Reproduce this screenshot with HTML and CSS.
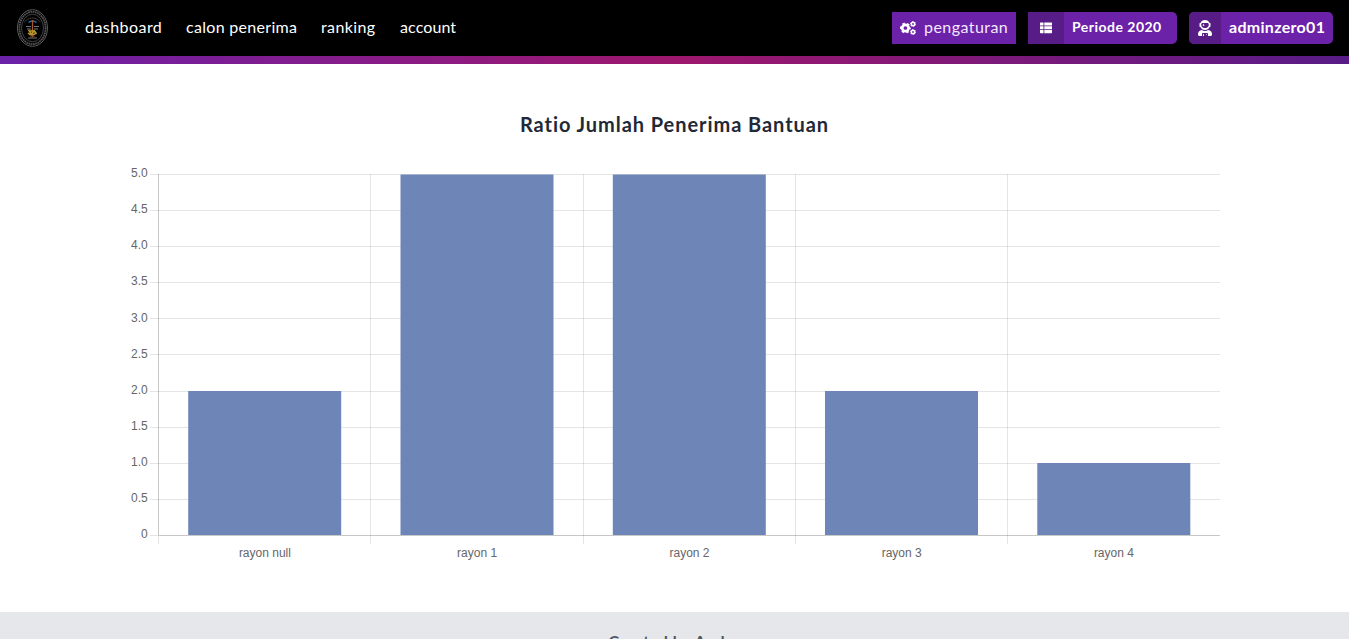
FILE: index.html
```html
<!DOCTYPE html>
<html lang="id">
<head>
<meta charset="utf-8">
<title>Dashboard</title>
<link rel="stylesheet" href="styles.css">
</head>
<body>
<header class="bar">
  <svg class="logo" width="32" height="38" viewBox="0 0 32 38">
    <g fill="none">
      <ellipse cx="15.500" cy="19" rx="15" ry="18.300" stroke="#666" stroke-width=".9"/>
      <ellipse cx="15.500" cy="19" rx="13.100" ry="16.200" stroke="#55555a" stroke-width="1.800" stroke-dasharray="1.700 .6"/>
      <ellipse cx="15.500" cy="19" rx="11" ry="13.800" stroke="#555" stroke-width=".8"/>
      <path d="M7.500 13q8-8 16 0" stroke="#555" stroke-dasharray="1.500 .7"/>
      <path d="M9 17.500h5M17 17.500h5M10 20h4M17 20h4M11 29h9" stroke="#777"/>
      <path d="M11.500 13.500q4-3 8 0" stroke="#2573b8" stroke-width="1.500"/>
      <path d="M15.500 11v17" stroke="#a9562b" stroke-width="1.300"/>
      <path d="M11.500 21l3 4 3-3 2 3M11 24q4 4 8 0M13 22h5" stroke="#b8962b" stroke-width="1.500"/>
      <path d="M13.500 28l2-2 2 2" stroke="#91432d"/>
    </g>
  </svg>
  <nav class="menu">
    <a class="dash">dashboard</a>
    <a class="calon">calon penerima</a>
    <a class="rank">ranking</a>
    <a class="acct">account</a>
  </nav>
  <div class="actions">
    <a class="button settings">
      <svg width="16" height="14" viewBox="0 0 16 14" fill="none" stroke="#fff">
        <circle cx="5.400" cy="7" r="3.200" stroke-width="2.700"/>
        <circle cx="5.400" cy="7" r="4.600" stroke-width="1.700" stroke-dasharray="2.400 2.417" stroke-dashoffset="1.200"/>
        <circle cx="13" cy="3" r="1.700" stroke-width="1.600"/>
        <circle cx="13" cy="3" r="2.500" stroke-width=".8" stroke-dasharray="1.300 1.310"/>
        <circle cx="13" cy="11" r="1.700" stroke-width="1.600"/>
        <circle cx="13" cy="11" r="2.500" stroke-width=".8" stroke-dasharray="1.300 1.310"/>
      </svg>
      <span>pengaturan</span>
    </a>
    <a class="button period">
      <i class="cap"><svg width="12" height="12" viewBox="0 0 12 12" fill="#fff"><path d="M.5.500H3.500V3.500H0V1zM4.300.500H11.500L12 1V3.500H4.300zM0 4.300H3.500V7.300H0zM4.300 4.300H12V7.300H4.300zM0 8.100H3.500V11.200H.5L0 10.700zM4.300 8.100H12V10.700L11.500 11.200H4.300z"/></svg></i>
      <span>Periode 2020</span>
    </a>
    <a class="button user">
      <i class="cap"><svg width="14" height="16" viewBox="0 0 448 512" fill="#fff"><path d="M64 224h13.500c24.700 56.500 80.900 96 146.500 96s121.800-39.500 146.500-96H384c8.800 0 16-7.200 16-16v-96c0-8.800-7.200-16-16-16h-13.500C345.800 39.500 289.600 0 224 0S102.200 39.500 77.500 96H64c-8.800 0-16 7.200-16 16v96c0 8.800 7.200 16 16 16zm40-88c0-22.100 21.500-40 48-40h144c26.500 0 48 17.900 48 40v24c0 53-43 96-96 96h-48c-53 0-96-43-96-96v-24zm72 72l12-36 36-12-36-12-12-36-12 36-36 12 36 12 12 36zm151.600 113.400C297.700 340.700 262.200 352 224 352s-73.700-11.300-103.600-30.600C52.900 328.500 0 385 0 454.400v9.600c0 26.500 21.500 48 48 48h80v-64c0-17.700 14.300-32 32-32h128c17.700 0 32 14.300 32 32v64h80c26.500 0 48-21.500 48-48v-9.600c0-69.400-52.900-125.900-120.400-133zM272 448c-8.800 0-16 7.200-16 16s7.200 16 16 16 16-7.200 16-16-7.200-16-16-16zm-96 0c-8.800 0-16 7.200-16 16v48h32v-48c0-8.800-7.200-16-16-16z"/></svg></i>
      <span>adminzero01</span>
    </a>
  </div>
</header>
<div class="stripe"></div>
<main class="content">
  <h1 class="title">Ratio Jumlah Penerima Bantuan</h1>
  <svg class="chart" width="1109" height="408" viewBox="120 164 1109 408">
    <path class="grid" d="M150 174.500H1220M150 210.500H1220M150 246.500H1220M150 282.500H1220M150 318.500H1220M150 354.500H1220M150 391.500H1220M150 427.500H1220M150 463.500H1220M150 499.500H1220M150 535.500H158"/>
    <path class="grid" d="M370.500 174V544M583.500 174V544M795.500 174V544M1007.500 174V544M158.500 536V544"/>
    <path class="axis" d="M158.500 174V535M158 535.500H1220"/>
    <g class="bars">
      <rect x="188.200" y="391" width="153" height="144"/>
      <rect x="400.500" y="174.500" width="153" height="360.500"/>
      <rect x="612.800" y="174.500" width="153" height="360.500"/>
      <rect x="825" y="391" width="153" height="144"/>
      <rect x="1037.300" y="463" width="153" height="72"/>
    </g>
    <g class="labels" text-anchor="end">
      <text x="147.800" y="177">5.0</text><text x="147.800" y="213">4.5</text>
      <text x="147.800" y="249">4.0</text><text x="147.800" y="285">3.5</text>
      <text x="147.800" y="322">3.0</text><text x="147.800" y="358">2.5</text>
      <text x="147.800" y="394">2.0</text><text x="147.800" y="430">1.5</text>
      <text x="147.800" y="466">1.0</text><text x="147.800" y="502">0.5</text>
      <text x="147.800" y="538">0</text>
    </g>
    <g class="labels" text-anchor="middle">
      <text x="264.900" y="557">rayon null</text><text x="477.100" y="557">rayon 1</text>
      <text x="689.500" y="557">rayon 2</text><text x="901.700" y="557">rayon 3</text>
      <text x="1113.900" y="557">rayon 4</text>
    </g>
  </svg>
</main>
<footer class="footer">Created by Andre</footer>
</body>
</html>
```
FILE: styles.css
```css
* { box-sizing: border-box; }
body { margin: 0; height: 639px; overflow: hidden; background: #fff; font-family: Lato, sans-serif; font-size: 16px; }
.bar { height: 56px; background: #000; color: #fff; display: flex; align-items: center; padding: 0 16px 0 17px; }
.logo { flex: none; }
.menu { display: flex; gap: 24px; margin-left: 36px; line-height: 24px; padding-bottom: 2px; }
.menu a { white-space: nowrap; }
.dash { width: 77px; letter-spacing: .45px; }
.calon { width: 111px; letter-spacing: .3px; }
.rank { width: 55px; letter-spacing: .4px; }
.acct { width: 56px; letter-spacing: .1px; }
.actions { display: flex; gap: 12px; margin-left: auto; }
.button { height: 32px; display: flex; align-items: center; background: #6b21a8; white-space: nowrap; overflow: hidden; line-height: 30px; }
.button svg { display: block; flex: none; }
.button span { padding-bottom: 2px; }
.settings { width: 124px; padding-left: 8px; gap: 8px; color: #f3e8ff; letter-spacing: .45px; }
.period { width: 149px; border-radius: 0 5px 5px 0; font-size: 14px; font-weight: 700; letter-spacing: .48px; }
.user { width: 144px; border-radius: 5px; font-weight: 700; letter-spacing: .3px; }
.cap { height: 32px; display: flex; align-items: center; justify-content: center; background: #581c87; margin-right: 8px; }
.period .cap { width: 36px; }
.user .cap { width: 32px; }
.stripe { height: 8px; background: linear-gradient(90deg, #6b21a8, #9d176d 50%, #581c87); }
.content { height: 548px; padding-top: 44px; display: flex; flex-direction: column; align-items: center; }
.title { margin: 0; height: 32px; line-height: 32px; font-size: 20px; font-weight: 700; letter-spacing: .94px; color: #1f2937; white-space: nowrap; }
.chart { display: block; flex: none; margin-top: 24px; }
.grid { stroke: rgba(0, 0, 0, .1); fill: none; }
.axis { stroke: rgba(0, 0, 0, .22); fill: none; }
.bars { fill: #6e85b7; }
.labels { font: 12px "Liberation Sans", Arial, sans-serif; fill: #666; }
.footer { height: 27px; overflow: hidden; background: #e5e7eb; color: #4b5563; text-align: center; font-size: 16px; font-weight: 700; line-height: 24px; padding-top: 17px; letter-spacing: .5px; }
```
